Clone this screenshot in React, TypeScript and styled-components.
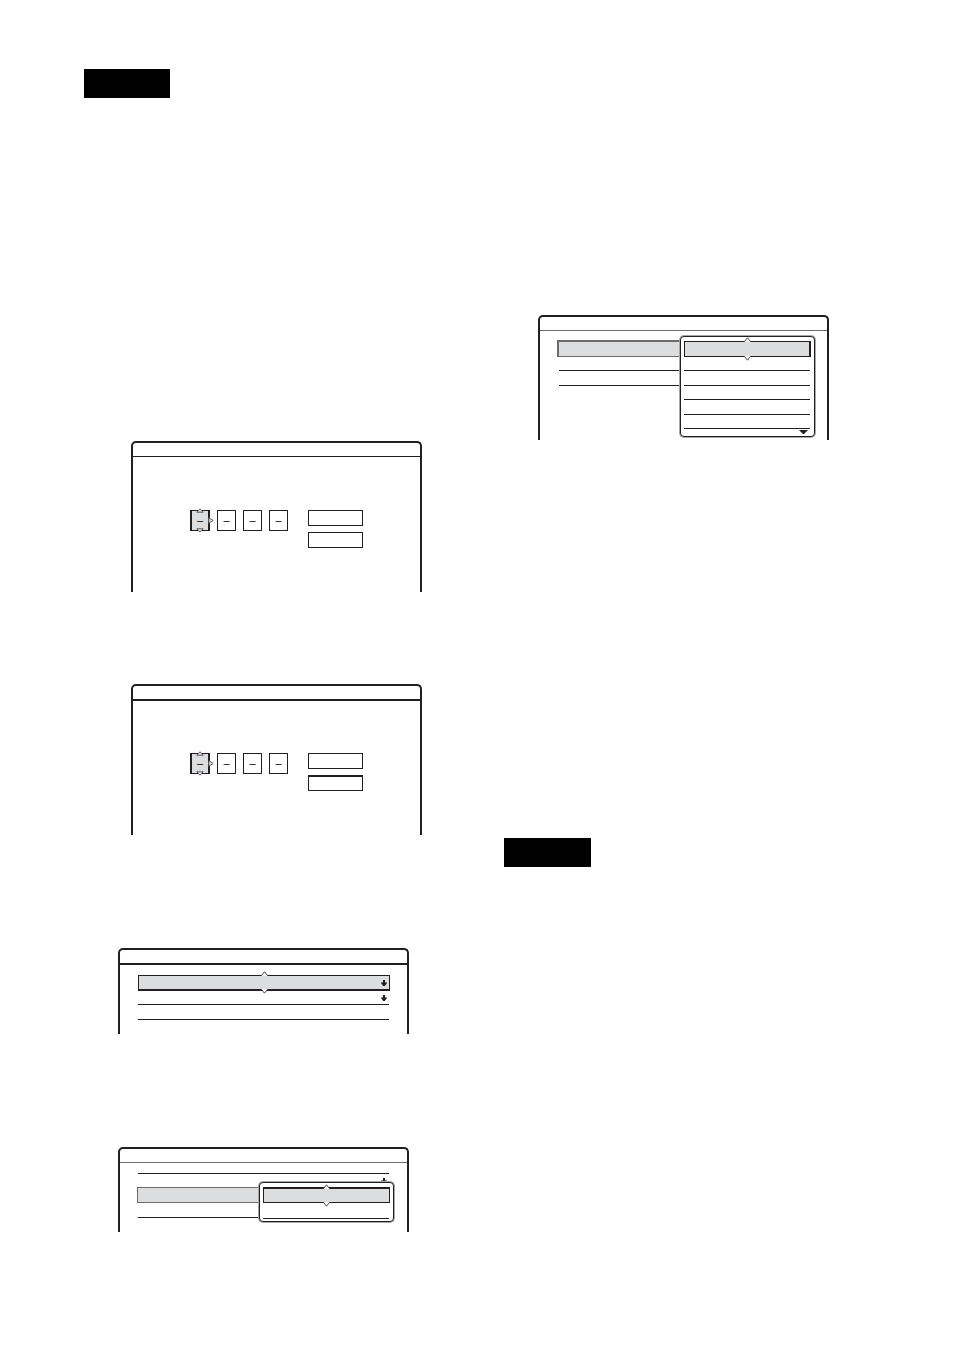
import React from 'react';
import styled, { createGlobalStyle, css } from 'styled-components';

const ink = '#231f20';
const soft = '#6d6a6b';
const fill = '#dcddde';

const GlobalStyle = createGlobalStyle`
  *, *::before, *::after { box-sizing: border-box; }
  body {
    margin: 0;
    background: #fff;
    color: ${ink};
    font-family: "Liberation Sans", Arial, sans-serif;
  }
`;

const Page = styled.main`
  display: grid;
  grid-template-columns: 1fr 1fr;
  padding: 69px 30px 119px 84px;
`;

const Column = styled.div`
  display: flex;
  flex-direction: column;
  align-items: flex-start;
`;

const TitleBar = styled.div<{ $width: number; $space?: number }>`
  width: ${(p) => p.$width}px;
  height: 29px;
  margin-top: ${(p) => p.$space ?? 0}px;
  background: #000;
`;

const Panel = styled.section<{ $space: number; $indent: number; $height: number }>`
  position: relative;
  width: 100%;
  max-width: 291px;
  min-height: ${(p) => p.$height}px;
  margin: ${(p) => p.$space}px 0 0 ${(p) => p.$indent}px;
  border: 2px solid ${ink};
  border-bottom: 0;
  border-radius: 5px 5px 0 0;
`;

const PanelHeader = styled.header<{ $rule?: number; $soft?: boolean }>`
  box-sizing: content-box;
  height: 13px;
  border-bottom: ${(p) => p.$rule ?? 1}px solid ${(p) => (p.$soft ? soft : ink)};
  margin-bottom: ${(p) => 2 - (p.$rule ?? 1)}px;
`;

const CodeForm = styled.form`
  display: flex;
  align-items: flex-start;
  gap: 20px;
  padding: 52px 0 0 57px;
`;

const Digits = styled.div`
  display: flex;
  gap: 7px;
`;

const DigitCell = styled.div`
  position: relative;
`;

const Digit = styled.input<{ $active?: boolean }>`
  display: block;
  width: ${(p) => (p.$active ? 20 : 19)}px;
  height: 21px;
  padding: 0 0 2px;
  border: 1px solid ${ink};
  border-width: ${(p) => (p.$active ? '1px 2px' : '1px')};
  border-radius: 0;
  background: ${(p) => (p.$active ? fill : '#fff')};
  color: #000;
  font: 11px/17px "Liberation Sans", Arial, sans-serif;
  text-align: center;
  outline: none;
`;

const Actions = styled.div`
  display: flex;
  flex-direction: column;
  gap: 6px;
`;

const Action = styled.button<{ $heavy?: boolean }>`
  width: 55px;
  height: 16px;
  padding: 0;
  border: 1px solid ${ink};
  border-top-width: ${(p) => (p.$heavy ? 2 : 1)}px;
  border-radius: 0;
  background: #fff;
`;

const Menu = styled.div<{ $top: number; $left: number }>`
  display: flex;
  flex-direction: column;
  padding: ${(p) => p.$top}px 18px 0 ${(p) => p.$left}px;
`;

const Item = styled.button<{ $height: number; $plain?: boolean }>`
  display: flex;
  align-items: center;
  justify-content: flex-end;
  height: ${(p) => p.$height}px;
  padding: 0 2px 0 0;
  border: 0 solid ${ink};
  border-bottom-width: ${(p) => (p.$plain ? 0 : 1)}px;
  border-radius: 0;
  background: transparent;
`;

const SelectedItem = styled(Item)<{ $borders?: string; $soft?: boolean; $outset?: number }>`
  position: relative;
  border-style: solid;
  border-color: ${(p) => (p.$soft ? soft : ink)};
  border-width: ${(p) => p.$borders ?? '1px'};
  margin-left: ${(p) => -(p.$outset ?? 0)}px;
  margin-right: -1px;
  background: ${fill};
`;

const Popup = styled.div<{ $left: number; $top: number }>`
  position: absolute;
  left: ${(p) => p.$left}px;
  top: ${(p) => p.$top}px;
  display: flex;
  flex-direction: column;
  width: 135px;
  padding: 4px 4px 2px 3px;
  border: 1px solid ${ink};
  border-radius: 4px;
  box-shadow: 0 0 0 1px #a9a7a8;
  background: #fff;
`;

const MoreBelow = styled.svg`
  display: block;
  align-self: flex-end;
  width: 9px;
  height: 4px;
  margin: 1px 2px 0 0;
`;

type Side = 'up' | 'down' | 'right';

const sides = {
  up: css`left: 0; right: 0; top: -5px; margin: 0 auto;`,
  down: css`left: 0; right: 0; bottom: -5px; margin: 0 auto;`,
  right: css`right: -4px; top: 7px;`,
};

const Marker = styled.svg<{ $side: Side; $inset?: boolean }>`
  position: absolute;
  display: block;
  ${(p) => sides[p.$side]}
  ${(p) => p.$inset && p.$side === 'up' && 'top: -2px;'}
  ${(p) => p.$inset && p.$side === 'down' && 'bottom: -2px;'}
`;

function Caret({ side, inset }: { side: Side; inset?: boolean }) {
  if (side === 'right') {
    return (
      <Marker $side="right" width="6" height="7" viewBox="0 0 6 7" aria-hidden="true">
        <path d="M.8 .7V6.3L5.2 3.5Z" fill="#e4e4e4" stroke="#5a5758" />
      </Marker>
    );
  }
  const up = side === 'up';
  if (inset) {
    return (
      <Marker $side={side} $inset width="8" height="5" viewBox="0 0 8 5" aria-hidden="true">
        <path d={up ? 'M.8 4.2H7.2L4 .8Z' : 'M.8 .8H7.2L4 4.2Z'} fill="#e4e4e4" stroke="#5a5758" />
      </Marker>
    );
  }
  return (
    <Marker $side={side} width="7" height="6" viewBox="0 0 7 6" aria-hidden="true">
      <path d={up ? 'M.4 5L3.5 .8L6.6 5Z' : 'M.4 1L3.5 5.2L6.6 1Z'} fill="#f2f2f2" />
      <path
        d={up ? 'M.4 4.6L3.5 .8L6.6 4.6' : 'M.4 1.4L3.5 5.2L6.6 1.4'}
        fill="none"
        stroke="#4a4748"
      />
    </Marker>
  );
}

function DownArrow() {
  return (
    <svg width="6" height="6" viewBox="0 0 6 6" aria-hidden="true">
      <path d="M2 0H4V2.4H6V3L3.8 5.9H2.2L0 3V2.4H2Z" fill={ink} />
    </svg>
  );
}

function CodePanel({ space, heavy }: { space: number; heavy?: boolean }) {
  return (
    <Panel $space={space} $indent={47} $height={151}>
      <PanelHeader $rule={heavy ? 2 : 1} />
      <CodeForm onSubmit={(e) => e.preventDefault()}>
        <Digits>
          {[1, 2, 3, 4].map((n) => (
            <DigitCell key={n}>
              <Digit $active={n === 1} aria-label={`Digit ${n}`} defaultValue="–" maxLength={1} />
              {n === 1 && (
                <>
                  <Caret side="up" inset />
                  <Caret side="down" inset />
                  <Caret side="right" />
                </>
              )}
            </DigitCell>
          ))}
        </Digits>
        <Actions>
          <Action type="submit" aria-label="Confirm" />
          <Action type="reset" aria-label="Clear" $heavy={heavy} />
        </Actions>
      </CodeForm>
    </Panel>
  );
}

export default function App() {
  return (
    <>
      <GlobalStyle />
      <Page>
        <Column>
          <TitleBar $width={86} />
          <CodePanel space={343} />
          <CodePanel space={92} heavy />

          <Panel $space={113} $indent={34} $height={86}>
            <PanelHeader $rule={2} />
            <Menu $top={10} $left={18}>
              <SelectedItem $height={16} $borders="1px 1px 2px" aria-label="Option 1">
                <DownArrow />
                <Caret side="up" />
                <Caret side="down" />
              </SelectedItem>
              <Item $height={14} aria-label="Option 2">
                <DownArrow />
              </Item>
              <Item $height={15} aria-label="Option 3" />
            </Menu>
          </Panel>

          <Panel $space={113} $indent={34} $height={85}>
            <PanelHeader $soft />
            <Menu $top={0} $left={18}>
              <Item $height={10} aria-label="Option 1" />
              <Item $height={13} $plain aria-label="Option 2">
                <DownArrow />
              </Item>
              <SelectedItem $height={16} $outset={1} $soft aria-label="Option 3" />
              <Item $height={15} aria-label="Option 4" />
            </Menu>
            <Popup $left={139} $top={33}>
              <SelectedItem $height={16} $borders="2px 1px 1px" aria-label="Value 1">
                <Caret side="up" />
                <Caret side="down" />
              </SelectedItem>
              <Item $height={16} aria-label="Value 2" />
            </Popup>
          </Panel>
        </Column>

        <Column>
          <Panel $space={246} $indent={34} $height={125}>
            <PanelHeader $soft />
            <Menu $top={8} $left={19}>
              <SelectedItem $height={17} $outset={2} $borders="2px 1px 1px 2px" $soft aria-label="Option 1" />
              <Item $height={14} aria-label="Option 2" />
              <Item $height={15} aria-label="Option 3" />
            </Menu>
            <Popup $left={140} $top={19}>
              <SelectedItem $height={16} $borders="1px 2px 1px 1px" aria-label="Value 1">
                <Caret side="up" />
                <Caret side="down" />
              </SelectedItem>
              <Item $height={14} aria-label="Value 2" />
              <Item $height={15} aria-label="Value 3" />
              <Item $height={14} aria-label="Value 4" />
              <Item $height={15} aria-label="Value 5" />
              <Item $height={14} aria-label="Value 6" />
              <MoreBelow viewBox="0 0 9 4" aria-hidden="true">
                <path d="M0 0H9L5 4H4Z" fill={ink} />
              </MoreBelow>
            </Popup>
          </Panel>
          <TitleBar $width={87} $space={398} />
        </Column>
      </Page>
    </>
  );
}
